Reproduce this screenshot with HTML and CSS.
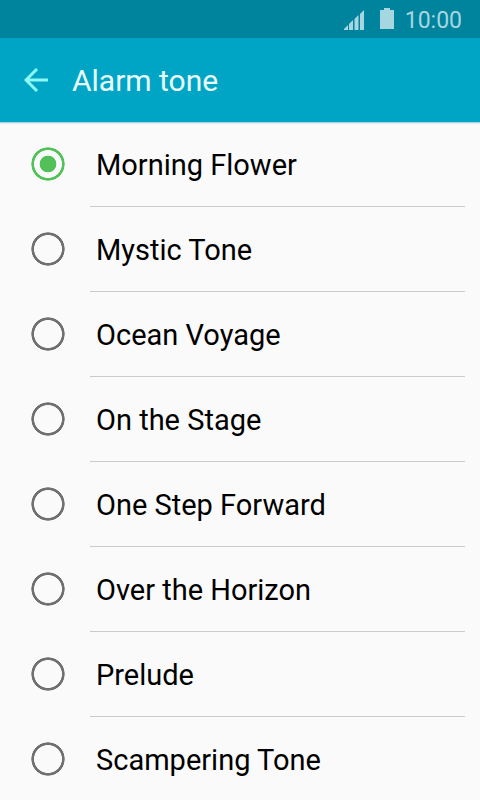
FILE: index.html
```html
<!DOCTYPE html>
<html lang="en">
<head>
<meta charset="utf-8">
<meta name="viewport" content="width=device-width, initial-scale=1">
<title>Alarm tone</title>
<link rel="stylesheet" href="styles.css">
</head>
<body>
<div class="status-bar">
  <svg class="signal" width="20" height="20" viewBox="0 0 20 20" aria-hidden="true">
    <path d="M0 20v-1l4-4v5zM5 20v-6l4-4v10zM10.500 20V9l4-4v15zM16 20V4l4-4v20z"/>
  </svg>
  <svg class="battery" width="14" height="21" viewBox="0 0 14 21" aria-hidden="true">
    <path d="M4 0h6v2h4v19H0V2h4z"/>
  </svg>
  <time class="clock">10:00</time>
</div>
<header class="app-bar">
  <button class="back" type="button" aria-label="Back">
    <svg width="24" height="24" viewBox="0 0 24 24" aria-hidden="true">
      <path d="M24 12H2M13 1L2 12l11 11"/>
    </svg>
  </button>
  <h1 class="title">Alarm tone</h1>
</header>
<main class="tones">
  <label class="tone"><input class="radio" type="radio" name="tone" checked><span class="name">Morning Flower</span></label>
  <label class="tone"><input class="radio" type="radio" name="tone"><span class="name">Mystic Tone</span></label>
  <label class="tone"><input class="radio" type="radio" name="tone"><span class="name">Ocean Voyage</span></label>
  <label class="tone"><input class="radio" type="radio" name="tone"><span class="name">On the Stage</span></label>
  <label class="tone"><input class="radio" type="radio" name="tone"><span class="name">One Step Forward</span></label>
  <label class="tone"><input class="radio" type="radio" name="tone"><span class="name">Over the Horizon</span></label>
  <label class="tone"><input class="radio" type="radio" name="tone"><span class="name">Prelude</span></label>
  <label class="tone"><input class="radio" type="radio" name="tone"><span class="name">Scampering Tone</span></label>
</main>
</body>
</html>
```
FILE: styles.css
```css
* {
  box-sizing: border-box;
}

html {
  height: 100%;
}

body {
  display: flex;
  flex-direction: column;
  height: 100%;
  margin: 0;
  overflow: hidden;
  background: #fafafa;
  color: #000;
  font-family: Roboto, sans-serif;
}

.status-bar {
  display: flex;
  flex: none;
  justify-content: flex-end;
  align-items: flex-end;
  padding: 6px 18px 0 0;
  background: #00839d;
  color: #a6d7e0;
  fill: currentColor;
}

.signal {
  margin: 0 16px 8px 0;
}

.battery {
  margin: 0 11px 9px 0;
}

.clock {
  padding-bottom: 2px;
  font-size: 23px;
  line-height: 30px;
}

.app-bar {
  display: flex;
  flex: none;
  align-items: center;
  padding: 22px 24px 20px;
  background: #00a5c5;
  box-shadow: 0 1px 0 #a5d5e0, 0 2px 0 #e6ecee;
}

.back {
  display: flex;
  margin: 0 24px 2px 0;
  padding: 0;
  border: 0;
  background: none;
}

.back svg {
  fill: none;
  stroke: #8cfaf8;
  stroke-width: 3;
}

.title {
  margin: 0;
  color: #e8fbfd;
  font-size: 30px;
  font-weight: 400;
  line-height: 42px;
}

.tones {
  flex: 1;
  min-height: 0;
  overflow: hidden;
}

.tone {
  display: flex;
  align-items: center;
  padding: 0 15px 0 31px;
}

.radio {
  flex: none;
  width: 34px;
  height: 34px;
  margin: 0 25px 2px 0;
  border-radius: 50%;
  background: radial-gradient(closest-side, transparent 80%, #707070 84%, #707070 96%, transparent 100%);
  appearance: none;
}

.radio:checked {
  background: radial-gradient(closest-side, #52c15a 47%, transparent 51%, transparent 80%, #52c15a 84%, #52c15a 96%, transparent 100%);
}

.name {
  flex: 1;
  padding: 23px 6px 21px;
  border-bottom: 1px solid #cbcbcb;
  font-size: 29px;
  line-height: 40px;
}
```
